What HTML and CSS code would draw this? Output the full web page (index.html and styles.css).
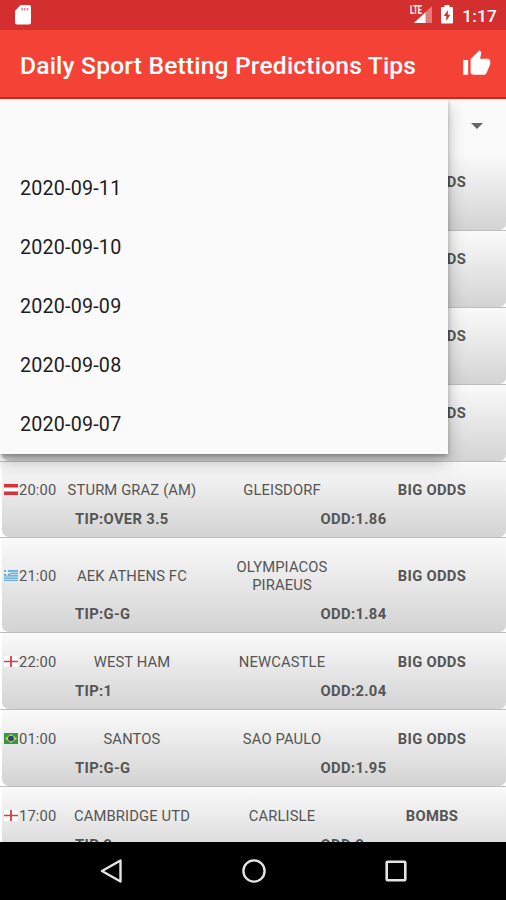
FILE: index.html
```html
<!DOCTYPE html>
<html lang="en">
<head>
  <meta charset="utf-8">
  <title>Daily Sport Betting Predictions Tips</title>
  <link rel="stylesheet" href="styles.css">
</head>
<body>
  <div class="screen">
    <div class="status-bar">
      <svg class="sd-icon" width="16" height="20" viewBox="0 0 16 20">
        <path d="M5.500 0H14a2 2 0 0 1 2 2v15.500a2 2 0 0 1-2 2H2a2 2 0 0 1-2-2V6z" fill="#fff"/>
        <path d="M6.200 3h1.600v2.500H6.200zM9 3h1.600v2.500H9zM11.800 3h1.600v2.500h-1.600z" fill="#e58a8a"/>
      </svg>
      <div class="status-right">
        <div class="signal">
          <svg width="22" height="19" viewBox="0 0 22 19">
            <path d="M22 1v17H4z" fill="#e27c7c"/>
            <path d="M15.500 7.200V18H4z" fill="#fff"/>
          </svg>
          <span class="lte">LTE</span>
        </div>
        <svg class="battery" width="12" height="19" viewBox="0 0 12 19">
          <path d="M3.500 0h5v2H11a1 1 0 0 1 1 1v14.500a1 1 0 0 1-1 1H1a1 1 0 0 1-1-1V3a1 1 0 0 1 1-1h2.500z" fill="#fff"/>
          <path d="M6.800 5L2.800 11h2.500v5l4-6.300H6.800z" fill="#d32f2f"/>
        </svg>
        <span class="clock">1:17</span>
      </div>
    </div>

    <div class="app-bar">
      <h1>Daily Sport Betting Predictions Tips</h1>
      <svg class="like" width="29.500" height="29.500" viewBox="0 0 24 24">
        <path fill="#fff" d="M1 21h4V9H1v12zm22-11c0-1.100-.9-2-2-2h-6.310l.95-4.570.03-.32c0-.41-.17-.79-.44-1.060L14.170 1 7.590 7.590C7.220 7.950 7 8.450 7 9v10c0 1.100.9 2 2 2h9c.83 0 1.540-.5 1.840-1.220l3.020-7.050c.09-.23.14-.47.14-.73v-2z"/>
      </svg>
    </div>

    <div class="content">
      <div class="spinner">
        <svg width="12" height="6" viewBox="0 0 12 6"><path d="M0 0h12L6 6z" fill="#666"/></svg>
      </div>

      <div class="row">
        <div class="card"><div class="match"><b class="label">BIG ODDS</b></div></div>
      </div>
      <div class="row">
        <div class="card"><div class="match"><b class="label">BIG ODDS</b></div></div>
      </div>
      <div class="row">
        <div class="card"><div class="match"><b class="label">BIG ODDS</b></div></div>
      </div>
      <div class="row">
        <div class="card"><div class="match"><b class="label">BIG ODDS</b></div></div>
      </div>

      <div class="row">
        <div class="card">
          <div class="match">
            <svg class="flag" width="14" height="11" viewBox="0 0 14 12" preserveAspectRatio="none">
              <path d="M0 0h14v4H0zM0 8h14v4H0z" fill="#d8323c"/><path d="M0 4h14v4H0z" fill="#fff"/>
            </svg>
            <span class="time">20:00</span>
            <span class="team">STURM GRAZ (AM)</span>
            <span class="team">GLEISDORF</span>
            <b class="label">BIG ODDS</b>
          </div>
          <div class="bet"><span class="tip">TIP:OVER 3.5</span><span>ODD:1.86</span></div>
        </div>
      </div>
      <div class="row">
        <div class="card">
          <div class="match">
            <svg class="flag" width="14" height="11" viewBox="0 0 14 12" preserveAspectRatio="none">
              <path d="M0 0h14v12H0z" fill="#6db0d8"/>
              <path d="M6 2.500h8M6 5h8M0 7.700h14M0 10.300h14" stroke="#c9e1ef"/>
              <path d="M3 0v6M0 3h6" stroke="#fff" stroke-width="1.400"/>
            </svg>
            <span class="time">21:00</span>
            <span class="team">AEK ATHENS FC</span>
            <span class="team">OLYMPIACOS PIRAEUS</span>
            <b class="label">BIG ODDS</b>
          </div>
          <div class="bet"><span class="tip">TIP:G-G</span><span>ODD:1.84</span></div>
        </div>
      </div>
      <div class="row">
        <div class="card">
          <div class="match">
            <svg class="flag" width="14" height="11" viewBox="0 0 14 12" preserveAspectRatio="none">
              <path d="M0 0h14v12H0z" fill="#fff"/>
              <path d="M7 0v12M0 6h14" stroke="#d93a45" stroke-width="1.800"/>
            </svg>
            <span class="time">22:00</span>
            <span class="team">WEST HAM</span>
            <span class="team">NEWCASTLE</span>
            <b class="label">BIG ODDS</b>
          </div>
          <div class="bet"><span class="tip">TIP:1</span><span>ODD:2.04</span></div>
        </div>
      </div>
      <div class="row">
        <div class="card">
          <div class="match">
            <svg class="flag" width="14" height="11" viewBox="0 0 14 12" preserveAspectRatio="none">
              <path d="M0 0h14v12H0z" fill="#2f9a48"/>
              <path d="M7 1l6 5-6 5-6-5z" fill="#d5cf3d"/>
              <circle cx="7" cy="6" r="2.900" fill="#234a78"/>
            </svg>
            <span class="time">01:00</span>
            <span class="team">SANTOS</span>
            <span class="team">SAO PAULO</span>
            <b class="label">BIG ODDS</b>
          </div>
          <div class="bet"><span class="tip">TIP:G-G</span><span>ODD:1.95</span></div>
        </div>
      </div>
      <div class="row">
        <div class="card">
          <div class="match">
            <svg class="flag" width="14" height="11" viewBox="0 0 14 12" preserveAspectRatio="none">
              <path d="M0 0h14v12H0z" fill="#fff"/>
              <path d="M7 0v12M0 6h14" stroke="#d93a45" stroke-width="1.800"/>
            </svg>
            <span class="time">17:00</span>
            <span class="team">CAMBRIDGE UTD</span>
            <span class="team">CARLISLE</span>
            <b class="label">BOMBS</b>
          </div>
          <div class="bet"><span class="tip">TIP:2</span><span>ODD:2</span></div>
        </div>
      </div>

      <!-- date dropdown -->
      <ul class="dropdown">
        <li></li>
        <li>2020-09-11</li>
        <li>2020-09-10</li>
        <li>2020-09-09</li>
        <li>2020-09-08</li>
        <li>2020-09-07</li>
      </ul>
    </div>

    <div class="nav-bar">
      <svg width="24" height="26" viewBox="0 0 24 26"><path d="M3 13L21.500 2.500v21z" fill="none" stroke="#e4e4e4" stroke-width="2.400" stroke-linejoin="round"/></svg>
      <svg width="26" height="26" viewBox="0 0 26 26"><circle cx="13" cy="13" r="10.600" fill="none" stroke="#e4e4e4" stroke-width="2.400"/></svg>
      <svg width="24" height="26" viewBox="0 0 24 26"><rect x="2.700" y="3.700" width="18.600" height="18.600" rx="1" fill="none" stroke="#e4e4e4" stroke-width="2.600"/></svg>
    </div>
  </div>
</body>
</html>
```
FILE: styles.css
```css
* {
  box-sizing: border-box;
}

body {
  margin: 0;
  font-family: Roboto, sans-serif;
}

.screen {
  display: flex;
  flex-direction: column;
  width: 506px;
  height: 900px;
  overflow: hidden;
}

svg {
  display: block;
  flex: none;
}

/* status bar */
.status-bar {
  display: flex;
  justify-content: space-between;
  height: 30px;
  padding: 5px 9px 0 15px;
  background: #d32f2f;
  color: #fff;
}

.status-right {
  display: flex;
}

.signal {
  position: relative;
  margin-right: 9px;
}

.lte {
  position: absolute;
  left: 0;
  top: 1px;
  font-size: 12px;
  line-height: 9px;
  font-weight: 700;
  background: #d32f2f;
  transform: scaleX(0.62);
  transform-origin: left;
}

.battery {
  margin-right: 9px;
}

.clock {
  font-size: 17.2px;
  font-weight: 500;
  line-height: 22px;
  letter-spacing: 0.2px;
}

/* toolbar */
.app-bar {
  display: flex;
  align-items: center;
  justify-content: space-between;
  height: 69px;
  padding: 0 15px 0 20px;
  background: #f44336;
  border-bottom: 2px solid #d3231c;
  color: #fff;
}

.app-bar h1 {
  margin: 4px 0 0;
  font-size: 24.6px;
  font-weight: 500;
  letter-spacing: 0.18px;
  white-space: nowrap;
}

/* list */
.content {
  position: relative;
  flex: 1;
  overflow: hidden;
  background: #fafafa;
}

.spinner {
  display: flex;
  justify-content: flex-end;
  height: 55px;
  padding: 24px 23px 0 0;
}

.row {
  padding-left: 2px;
  background: #fff;
  border-bottom: 1px solid #bdbdbd;
}

.card {
  min-height: 75.9px;
  padding: 19.4px 0 9.5px;
  border-radius: 0 0 7px 7px;
  background: linear-gradient(#fafafa, #d3d3d3);
  color: #555;
  font-size: 14.76px;
  line-height: 18px;
  letter-spacing: 0.14px;
}

.match {
  display: flex;
  align-items: center;
  padding-left: 2px;
}

.flag {
  margin: -1px 1px 0 0;
}

.time {
  width: 38px;
}

.team {
  width: 150px;
  padding: 0 18px;
  text-align: center;
}

.team:nth-child(3) {
  padding: 0;
}

.label {
  width: 150px;
  margin-left: auto;
  margin-right: -1px;
  text-align: center;
  letter-spacing: 0.3px;
}

.bet {
  display: flex;
  margin-top: 11px;
  padding-left: 73px;
  font-weight: 700;
  letter-spacing: 0.35px;
}

.tip {
  width: 245.5px;
}

.dropdown {
  position: absolute;
  left: 0;
  top: 0;
  width: 448px;
  height: 355px;
  margin: 0;
  padding: 0;
  list-style: none;
  background: #fafafa;
  box-shadow: 0 8px 16px rgba(0, 0, 0, 0.25), 0 2px 4px rgba(0, 0, 0, 0.25);
}

.dropdown li {
  height: 59.1px;
  padding-left: 20px;
  font-size: 19.7px;
  line-height: 62px;
  letter-spacing: 0.2px;
  color: #1d1d1d;
}

/* system navigation */
.nav-bar {
  display: flex;
  align-items: center;
  justify-content: space-between;
  height: 58px;
  padding: 0 98px 0 99px;
  background: #000;
}
```
